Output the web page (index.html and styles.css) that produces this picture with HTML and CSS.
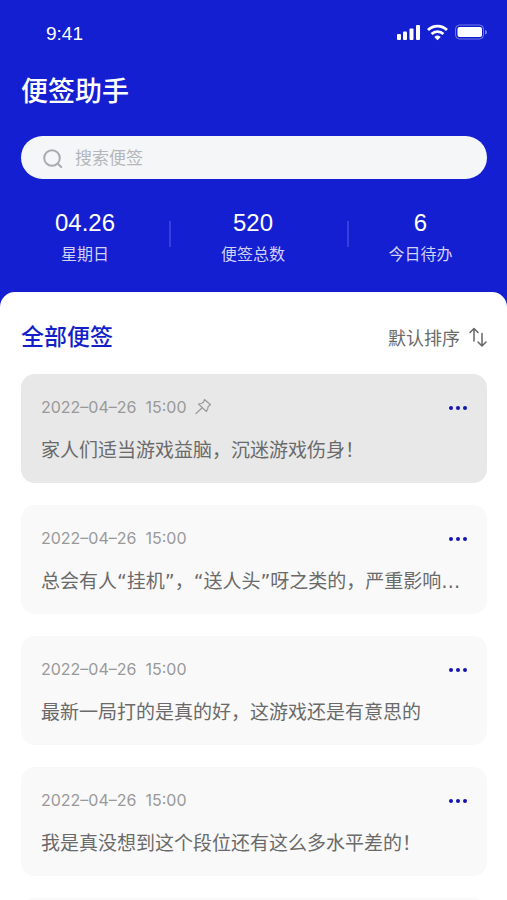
FILE: index.html
```html
<!DOCTYPE html>
<html lang="zh-CN">
<head>
    <meta charset="UTF-8">
    <meta name="viewport" content="width=device-width, initial-scale=1.0">
    <title>便签助手</title>
    <link rel="stylesheet" href="styles.css">
</head>
<body>
    <div class="app">
        <header class="header">
            <div class="status-bar">
                <span>9:41</span>
                <svg width="91" height="20" viewBox="0 0 91 20" fill="#fff" aria-hidden="true">
                    <rect x="1" y="12" width="4" height="6" rx="1"/>
                    <rect x="7" y="9.500" width="4" height="8.500" rx="1"/>
                    <rect x="13.500" y="6.500" width="4" height="11.500" rx="1"/>
                    <rect x="20" y="3" width="4" height="15" rx="1"/>
                    <g fill="none" stroke="#fff" stroke-width="2.800">
                        <path d="M32 8a13.500 13.500 0 0 1 19 0"/>
                        <path d="M35.600 12a8.500 8.500 0 0 1 11.800 0"/>
                    </g>
                    <path d="M38.300 14.900a5 5 0 0 1 6.400 0L41.500 18.200z"/>
                    <rect x="59.500" y="3" width="28" height="14" rx="4" fill="none" stroke="#fff" stroke-opacity=".4"/>
                    <rect x="61.500" y="5" width="24.500" height="10" rx="2"/>
                    <path d="M89 8v4.500q2-.6 2-2.300T89 8z" fill-opacity=".45"/>
                </svg>
            </div>
            <h1>便签助手</h1>
            <label class="search">
                <svg width="20" height="20" viewBox="0 0 20 20" fill="none" stroke="#a9abb0" stroke-width="2" stroke-linecap="round" aria-hidden="true">
                    <circle cx="9" cy="9" r="7.800"/>
                    <path d="M14.800 14.800l3.400 3.200"/>
                </svg>
                <input type="search" placeholder="搜索便签" aria-label="搜索便签">
            </label>
        </header>

        <div class="stats">
            <div class="stat stat-date"><strong>04.26</strong><span>星期日</span></div>
            <div class="stat stat-total"><strong>520</strong><span>便签总数</span></div>
            <div class="stat stat-todo"><strong>6</strong><span>今日待办</span></div>
        </div>

        <main class="sheet">
            <div class="sheet-head">
                <h2>全部便签</h2>
                <button class="sort" type="button">
                    默认排序
                    <svg width="18" height="20" viewBox="0 0 18 20" fill="none" stroke="#666" stroke-width="1.500" stroke-linecap="round" stroke-linejoin="round" aria-hidden="true">
                        <path d="M5 14V1.500M1 5.500l4-4 4 4"/>
                        <path d="M13 6.500V19M9 15l4 4 4-4"/>
                    </svg>
                </button>
            </div>

            <div class="notes">
                <article class="note pinned">
                    <div class="note-head">
                        <time datetime="2022-04-26T15:00">2022–04–26&nbsp; 15:00</time>
                        <svg class="pin" width="18" height="18" viewBox="0 0 18 18" fill="none" stroke="#999" stroke-width="1.200" stroke-linejoin="round" stroke-linecap="round" aria-hidden="true">
                            <path d="M10.500 1.500l6 5.200-1.300.9-1 .9-.6 2.500-1.200 2.500L4.500 6l2.800-.5 2.200-1.200z"/>
                            <path d="M8 10L2 15.500"/>
                        </svg>
                        <button class="more" type="button" aria-label="更多"><i></i><i></i><i></i></button>
                    </div>
                    <p>家人们适当游戏益脑，沉迷游戏伤身！</p>
                </article>
                <article class="note">
                    <div class="note-head">
                        <time datetime="2022-04-26T15:00">2022–04–26&nbsp; 15:00</time>
                        <button class="more" type="button" aria-label="更多"><i></i><i></i><i></i></button>
                    </div>
                    <p>总会有人“挂机”，“送人头”呀之类的，严重影响…</p>
                </article>
                <article class="note">
                    <div class="note-head">
                        <time datetime="2022-04-26T15:00">2022–04–26&nbsp; 15:00</time>
                        <button class="more" type="button" aria-label="更多"><i></i><i></i><i></i></button>
                    </div>
                    <p>最新一局打的是真的好，这游戏还是有意思的</p>
                </article>
                <article class="note">
                    <div class="note-head">
                        <time datetime="2022-04-26T15:00">2022–04–26&nbsp; 15:00</time>
                        <button class="more" type="button" aria-label="更多"><i></i><i></i><i></i></button>
                    </div>
                    <p>我是真没想到这个段位还有这么多水平差的！</p>
                </article>
                <article class="note"></article>
            </div>
        </main>
    </div>
</body>
</html>
```
FILE: styles.css
```css
* {
    box-sizing: border-box;
}

body {
    margin: 0;
    font-family: "Liberation Sans", "Noto Sans CJK SC", sans-serif;
    color: #6a6a6a;
    background-color: #141fd2;
}

h1, h2, p {
    margin: 0;
    font-weight: 500;
}

button {
    padding: 0;
    border: none;
    background: none;
    font-family: inherit;
    color: inherit;
    cursor: pointer;
}

.app {
    display: flex;
    flex-direction: column;
    height: 100vh;
}

.header {
    padding: 20px 20px 0 21px;
    color: #fff;
}

.status-bar {
    display: flex;
    justify-content: space-between;
    align-items: center;
    height: 28px;
    padding-left: 25px;
    font-size: 19px;
}

.status-bar svg {
    margin-bottom: 4px;
}

h1 {
    margin: 26px 0;
    font-size: 27px;
    line-height: 36px;
}

.search {
    display: flex;
    align-items: center;
    gap: 12px;
    height: 43px;
    padding: 2px 22px 0;
    border-radius: 22px;
    background-color: #f5f6f8;
}

.search svg {
    flex: none;
}

.search input {
    flex: 1;
    min-width: 0;
    padding: 0;
    border: none;
    outline: none;
    background: none;
    font-family: inherit;
    font-size: 17px;
    color: #666;
}

.search input::placeholder {
    color: #b4b6bb;
}

.stats {
    display: grid;
    grid-template-columns: 170fr 178fr 159fr;
    padding: 30px 0 25px;
    color: #fff;
}

.stat {
    position: relative;
    display: flex;
    flex-direction: column;
    align-items: center;
    gap: 6px;
}

.stat strong {
    font-size: 24px;
    font-weight: normal;
    line-height: 28px;
}

.stat span {
    font-size: 16px;
    line-height: 24px;
    color: #d0d2f6;
}

.stat-total {
    padding-right: 12px;
}

.stat-todo {
    padding-right: 14px;
}

.stat + .stat::before {
    content: "";
    position: absolute;
    left: -1px;
    top: 12px;
    width: 2px;
    height: 26px;
    background-color: #3540dc;
}

.sheet {
    flex: 1;
    display: flex;
    flex-direction: column;
    min-height: 0;
    padding: 29px 20px 0 21px;
    border-radius: 15px 15px 0 0;
    background-color: #fff;
}

.sheet-head {
    display: flex;
    justify-content: space-between;
    align-items: center;
    height: 32px;
    margin-bottom: 21px;
}

h2 {
    font-size: 23px;
    line-height: 32px;
    color: #141fc8;
}

.sort {
    display: flex;
    align-items: center;
    gap: 9px;
    font-size: 18px;
}

.notes {
    flex: 1;
    display: flex;
    flex-direction: column;
    gap: 22px;
    min-height: 0;
    overflow-y: auto;
    scrollbar-width: none;
}

.note {
    flex: none;
    min-height: 109px;
    padding: 21px 20px 19px;
    border-radius: 14px;
    background-color: #f9f9f9;
}

.note.pinned {
    background-color: #e8e8e8;
}

.note-head {
    display: flex;
    align-items: center;
    height: 24px;
    margin-bottom: 17px;
}

.note time {
    font-family: Inter, sans-serif;
    font-size: 16px;
    color: #999;
}

.pin {
    margin-left: 7px;
}

.more {
    display: flex;
    gap: 3px;
    padding: 10px 0 8px;
    margin-left: auto;
}

.more i {
    width: 4px;
    height: 4px;
    border-radius: 50%;
    background-color: #1414b4;
}

.note p {
    overflow: hidden;
    font-family: "DejaVu Sans", "Noto Sans CJK SC", sans-serif;
    font-size: 19px;
    font-weight: normal;
    line-height: 28px;
    white-space: nowrap;
    text-overflow: ellipsis;
}
```
